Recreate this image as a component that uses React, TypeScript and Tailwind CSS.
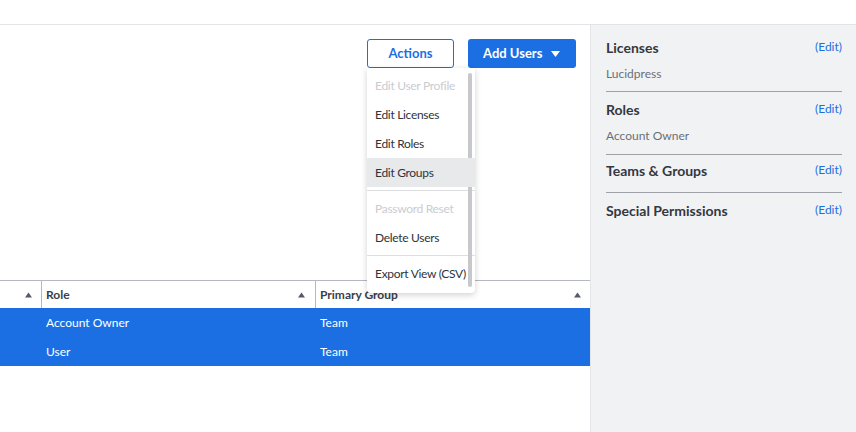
import React from "react";

const BLUE = "bg-[#1b6fe2]";

function SortArrow() {
  return (
    <svg width="7" height="6" viewBox="0 0 7 6" className="shrink-0">
      <path d="M3.5 0.5 L7 5.5 L0 5.5 Z" fill="#555b64" />
    </svg>
  );
}

function HeaderCell({ label, className }: { label?: string; className: string }) {
  return (
    <div className={`flex h-full items-center justify-between pl-[4px] ${className}`}>
      <span className="text-[12px] font-bold text-[#3b4048]">{label}</span>
      <SortArrow />
    </div>
  );
}

const menu: ({ label: string; disabled?: boolean; active?: boolean } | "divider")[] = [
  { label: "Edit User Profile", disabled: true },
  { label: "Edit Licenses" },
  { label: "Edit Roles" },
  { label: "Edit Groups", active: true },
  "divider",
  { label: "Password Reset", disabled: true },
  { label: "Delete Users" },
  "divider",
  { label: "Export View (CSV)" },
];

function ActionsMenu() {
  return (
    <div className="absolute left-0 top-[29px] z-10 w-[108px] rounded-b-[4px] bg-white pb-[5px] pt-[3px] shadow-[0_2px_6px_rgba(0,0,0,0.18)]">
      <div className="absolute right-[3px] top-[5px] h-[214px] w-[4px] rounded-full bg-[#c6c8cc]" />
      {menu.map((item, i) =>
        item === "divider" ? (
          <div key={i} className="my-[3px] h-px bg-[#dcdee2]" />
        ) : (
          <div
            key={i}
            className={`relative flex h-[29px] items-center whitespace-nowrap pl-[8px] text-[12px] tracking-[-0.3px] ${
              item.disabled ? "text-[#c9ccd1]" : "text-[#2f3339]"
            } ${item.active ? "bg-[#e8e9eb]" : ""}`}
          >
            {item.label}
          </div>
        )
      )}
    </div>
  );
}

function SideSection({
  title,
  sub,
  className,
  last,
}: {
  title: string;
  sub?: string;
  className: string;
  last?: boolean;
}) {
  return (
    <div className={`${last ? "" : "border-b border-[#9fa3a9]"} ${className}`}>
      <div className="flex h-5 items-center justify-between">
        <span className="text-[14px] font-bold text-[#34383f]">{title}</span>
        <span className="text-[12px] text-[#1b6fe2]">(Edit)</span>
      </div>
      {sub ? (
        <div className="mt-[7px] flex h-5 items-center text-[12px] text-[#6b7078]">{sub}</div>
      ) : null}
    </div>
  );
}

export default function App() {
  return (
    <div className="flex h-[432px] w-[856px] flex-col overflow-hidden bg-white font-['Lato',sans-serif]">
      <div className="h-[25px] shrink-0 border-b border-[#e2e4e7] bg-white" />

      <div className="flex flex-1">
        <main className="flex w-[590px] flex-col">
          <div className="flex justify-end gap-[14px] pr-[14px] pt-[14px]">
            <div className="relative">
              <button className="flex h-[29px] w-[87px] items-center justify-center rounded-[3px] border border-[#1b6fe2] bg-white text-[13px] font-bold text-[#1b6fe2]">
                Actions
              </button>
              <ActionsMenu />
            </div>
            <button
              className={`flex h-[29px] w-[108px] items-center justify-between rounded-[3px] ${BLUE} pl-[15px] pr-[16px] text-[13px] font-bold text-white`}
            >
              Add Users
              <svg width="9" height="6" viewBox="0 0 9 6">
                <path d="M0 0 H9 L4.5 6 Z" fill="white" />
              </svg>
            </button>
          </div>

          <div className="mt-[212px] border-t border-[#b5b9bf]">
            <div className="flex h-[27px]">
              <HeaderCell className="w-[42px] border-r border-[#b5b9bf] pr-[9px]" />
              <HeaderCell label="Role" className="w-[274px] border-r border-[#b5b9bf] pr-[10px]" />
              <HeaderCell label="Primary Group" className="flex-1 pr-[9px]" />
            </div>
            {[
              ["Account Owner", "Team"],
              ["User", "Team"],
            ].map(([role, group], i) => (
              <div key={i} className={`flex h-[29px] items-center text-[12px] text-white ${BLUE}`}>
                <div className="w-[42px]" />
                <div className="w-[274px] pl-[4px]">{role}</div>
                <div className="flex-1 pl-[4px]">{group}</div>
              </div>
            ))}
          </div>
        </main>

        <aside className="flex-1 border-l border-[#e3e5e8] bg-[#f1f2f4] pl-[15px] pr-[14px]">
          <SideSection title="Licenses" sub="Lucidpress" className="pb-[7px] pt-[12px]" />
          <SideSection title="Roles" sub="Account Owner" className="pb-[8px] pt-[7px]" />
          <SideSection title="Teams & Groups" className="pb-[12px] pt-[5px]" />
          <SideSection title="Special Permissions" className="pt-[7px]" last />
        </aside>
      </div>
    </div>
  );
}
